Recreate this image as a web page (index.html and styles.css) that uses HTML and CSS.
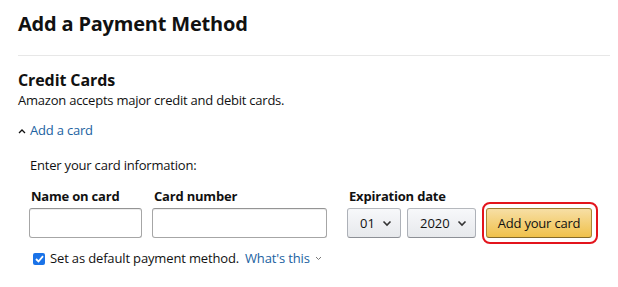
FILE: index.html
```html
<!DOCTYPE html>
<html lang="en">
<head>
<meta charset="utf-8">
<title>Add a Payment Method</title>
<link rel="stylesheet" href="styles.css">
</head>
<body>
<div class="page">
  <h1 class="title">Add a Payment Method</h1>
  <div class="divider"></div>
  <h2 class="section-title">Credit Cards</h2>
  <p class="section-desc">Amazon accepts major credit and debit cards.</p>
  <a class="toggle" href="#"><svg class="caret-up" width="8" height="6" viewBox="0 0 8 6"><path d="M1 5 L4 2 L7 5" fill="none" stroke="#111" stroke-width="1.3"/></svg>Add a card</a>
  <div class="card-form">
    <p class="intro">Enter your card information:</p>
    <div class="fields">
      <div class="field">
        <label class="label">Name on card</label>
        <div class="input name-input"></div>
      </div>
      <div class="field">
        <label class="label">Card number</label>
        <div class="input number-input"></div>
      </div>
      <div class="field exp">
        <label class="label">Expiration date</label>
        <div class="selects">
          <div class="select month">01<svg class="chev" width="10" height="7" viewBox="0 0 10 7"><path d="M1.5 1.5 L5 5 L8.5 1.5" fill="none" stroke="#333" stroke-width="1.6"/></svg></div>
          <div class="select year">2020<svg class="chev" width="10" height="7" viewBox="0 0 10 7"><path d="M1.5 1.5 L5 5 L8.5 1.5" fill="none" stroke="#333" stroke-width="1.6"/></svg></div>
        </div>
      </div>
      <div class="btn-wrap">
        <span class="highlight"></span>
        <button class="add-btn">Add your card</button>
      </div>
    </div>
    <div class="default-row">
      <span class="checkbox"><svg width="9" height="8" viewBox="0 0 9 8"><path d="M1 4 L3.5 6.5 L8 1.2" fill="none" stroke="#fff" stroke-width="1.8"/></svg></span>
      <span class="default-text">Set as default payment method.</span>
      <a class="whats" href="#">What's this</a>
      <svg class="small-chev" width="7" height="5" viewBox="0 0 7 5"><path d="M1 1 L3.5 3.5 L6 1" fill="none" stroke="#777" stroke-width="1"/></svg>
    </div>
  </div>
</div>
</body>
</html>
```
FILE: styles.css
```css
* { box-sizing: border-box; }
html, body { margin: 0; padding: 0; background: #fff; }
body {
  font-family: "Open Sans", "Noto Sans", "Liberation Sans", sans-serif;
  color: #111;
}
.page { padding: 8px 8px 0 18px; }
.title {
  margin: 1px 0 0 0;
  font-size: 20px;
  font-weight: 700;
  letter-spacing: -0.2px;
  line-height: 30px;
}
.divider {
  height: 1px;
  background: #e7e7e7;
  margin: 16px 0 0 0;
}
.section-title {
  margin: 13px 0 0 0;
  font-size: 16px;
  font-weight: 700;
  letter-spacing: -0.1px;
  line-height: 22px;
}
.section-desc {
  margin: 0;
  font-size: 13px;
  letter-spacing: -0.23px;
  line-height: 19px;
}
.toggle {
  display: inline-flex;
  align-items: center;
  margin-top: 11px;
  font-size: 13px;
  letter-spacing: -0.2px;
  line-height: 19px;
  color: #2162a1;
  text-decoration: none;
}
.caret-up { margin-right: 4px; }
.card-form { padding: 16px 0 0 11px; }
.intro { margin: 0 0 0 1px; font-size: 13px; letter-spacing: -0.2px; line-height: 19px; }
.fields {
  display: flex;
  align-items: flex-end;
  margin-top: 13px;
}
.field { display: flex; flex-direction: column; margin-right: 10px; }
.label {
  font-size: 13px;
  font-weight: 700;
  letter-spacing: -0.2px;
  line-height: 17px;
  margin: 0 0 3px 2px;
}
.input {
  height: 30px;
  border: 1px solid #a6a6a6;
  border-top-color: #949494;
  border-radius: 3px;
  box-shadow: 0 1px 0 rgba(0,0,0,.07) inset;
}
.name-input { width: 113px; }
.number-input { width: 175px; }
.exp { margin-left: 10px; margin-right: 10px; }
.selects { display: flex; gap: 6px; }
.select {
  height: 30px;
  display: flex;
  align-items: center;
  justify-content: space-between;
  padding: 0 8px 0 12px;
  font-size: 13px;
  border: 1px solid #adb1b8;
  border-top-color: #b5b8bd;
  border-bottom-color: #8d9096;
  border-radius: 3px;
  background: linear-gradient(to bottom, #f7f8fa, #e7e9ec);
}
.month { width: 54px; }
.year { width: 69px; }
.btn-wrap { position: relative; }
.highlight {
  position: absolute;
  left: -4px; top: -6px; right: -6px; bottom: -6px;
  border: 2px solid #e3141c;
  border-radius: 8px;
}
.add-btn {
  display: block;
  width: 106px;
  height: 30px;
  font-family: inherit;
  font-size: 13px;
  letter-spacing: -0.2px;
  color: #111;
  border: 1px solid #a88734;
  border-top-color: #9c7e31;
  border-bottom-color: #846a29;
  border-radius: 3px;
  background: linear-gradient(to bottom, #f7dfa5, #f0c14b);
  padding: 0;
}
.default-row {
  display: flex;
  align-items: center;
  margin-top: 11px;
  margin-left: 4px;
  font-size: 13px;
  letter-spacing: -0.15px;
  line-height: 19px;
}
.checkbox {
  width: 12px; height: 12px;
  border-radius: 2px;
  background: #1a73e8;
  display: flex; align-items: center; justify-content: center;
  margin-right: 5px;
}
.default-text { margin-right: 6px; }
.whats { color: #2162a1; text-decoration: none; }
.small-chev { margin-left: 5px; }
```
